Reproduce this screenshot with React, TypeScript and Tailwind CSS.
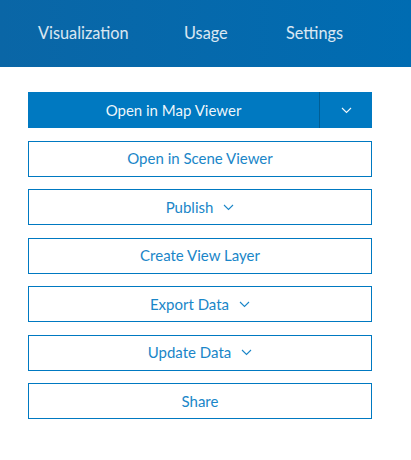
import React from "react";

const Chevron = ({ className = "" }: { className?: string }) => (
  <svg width="11" height="7" viewBox="0 0 11 7" className={className} fill="none">
    <path d="M1 1l4.5 4.5L10 1" stroke="currentColor" strokeWidth="1.1" />
  </svg>
);

const buttons = [
  { label: "Open in Scene Viewer", menu: false },
  { label: "Publish", menu: true },
  { label: "Create View Layer", menu: false },
  { label: "Export Data", menu: true },
  { label: "Update Data", menu: true },
  { label: "Share", menu: false },
];

export default function App() {
  return (
    <div className="w-[411px] h-[460px] bg-white" style={{ fontFamily: "Lato, 'Open Sans', sans-serif" }}>
      {/* Header tabs */}
      <div className="h-[67px] bg-gradient-to-r from-[#0a66a6] to-[#006cb2] flex items-center pl-[38px] text-[16.3px] text-white/85">
        <span className="w-[146px]">Visualization</span>
        <span className="w-[102px]">Usage</span>
        <span>Settings</span>
      </div>

      <div className="pl-[28px] pr-[39px] pt-[25px] flex flex-col gap-[12.5px]">
        {/* Split button */}
        <div className="flex h-[36px] bg-[#0079c1] text-white/95 text-[15px]">
          <button className="flex-1 flex items-center justify-center">Open in Map Viewer</button>
          <div className="w-px bg-[#005e95]" />
          <button className="w-[52px] flex items-center justify-center">
            <Chevron />
          </button>
        </div>

        {buttons.map((b) => (
          <button
            key={b.label}
            className="h-[36px] border border-[#0079c1] text-[#1a86c8] text-[15px] flex items-center justify-center gap-[10px] bg-white"
          >
            <span>{b.label}</span>
            {b.menu && <Chevron />}
          </button>
        ))}
      </div>
    </div>
  );
}
